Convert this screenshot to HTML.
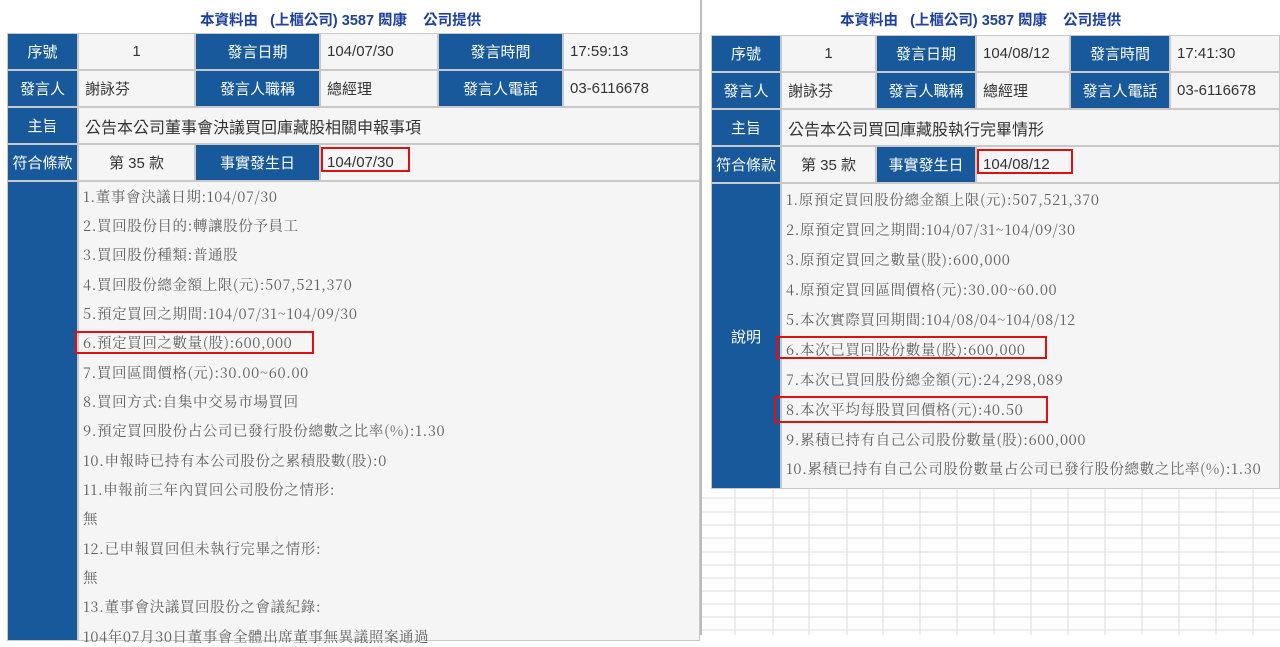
<!DOCTYPE html>
<html><head><meta charset="utf-8"><style>
*{margin:0;padding:0;box-sizing:border-box}
body{width:1280px;height:635px;background:#fff;position:relative;overflow:hidden;font-family:"Liberation Sans","Noto Sans CJK TC","Noto Sans CJK SC",sans-serif}
.a{position:absolute}
.h{position:absolute;background:#17599a;color:#fff;font-size:15px;display:flex;align-items:center;justify-content:center;border:1px solid #c8c8c8}
.v{position:absolute;background:#f5f5f5;color:#333;font-size:15px;display:flex;align-items:center;padding-left:6px;border:1px solid #c8c8c8}
.c{justify-content:center;padding-left:0}
.t{position:absolute;color:#1d3fa0;font-weight:bold;font-size:14.5px;white-space:pre}
.body{position:absolute;background:#f5f5f5;border:1px solid #c8c8c8;color:#606060;font-family:"Noto Serif CJK SC","Liberation Serif",serif;font-size:14.5px;letter-spacing:0.6px}
.body div{position:absolute;left:4px;white-space:nowrap;line-height:20px}
.r{position:absolute;border:2.5px solid #e01010}
</style></head><body>
<div class="a" style="left:700px;top:0;width:2px;height:635px;background:#bbb"></div>
<svg class="a" style="left:702px;top:488px" width="578" height="147">
<g stroke="#ddd" stroke-width="1">
<line x1="33" y1="0" x2="33" y2="147"/><line x1="71" y1="0" x2="71" y2="147"/><line x1="107" y1="0" x2="107" y2="147"/><line x1="145" y1="0" x2="145" y2="147"/><line x1="181" y1="0" x2="181" y2="147"/><line x1="218" y1="0" x2="218" y2="147"/><line x1="255" y1="0" x2="255" y2="147"/><line x1="292" y1="0" x2="292" y2="147"/><line x1="329" y1="0" x2="329" y2="147"/><line x1="366" y1="0" x2="366" y2="147"/><line x1="403" y1="0" x2="403" y2="147"/><line x1="440" y1="0" x2="440" y2="147"/><line x1="477" y1="0" x2="477" y2="147"/><line x1="514" y1="0" x2="514" y2="147"/><line x1="551" y1="0" x2="551" y2="147"/>
<line x1="0" y1="10" x2="578" y2="10"/><line x1="0" y1="24" x2="578" y2="24"/><line x1="0" y1="37" x2="578" y2="37"/><line x1="0" y1="50" x2="578" y2="50"/><line x1="0" y1="64" x2="578" y2="64"/><line x1="0" y1="77" x2="578" y2="77"/><line x1="0" y1="90" x2="578" y2="90"/><line x1="0" y1="103" x2="578" y2="103"/><line x1="0" y1="116" x2="578" y2="116"/><line x1="0" y1="129" x2="578" y2="129"/><line x1="0" y1="142" x2="578" y2="142"/>
</g></svg>

<div class="t" style="left:200px;top:9px">本資料由   (上櫃公司) 3587 閎康    公司提供</div>
<div class="h" style="left:7px;top:33px;width:71px;height:37px">序號</div>
<div class="v c" style="left:78px;top:33px;width:117px;height:37px">1</div>
<div class="h" style="left:195px;top:33px;width:125px;height:37px">發言日期</div>
<div class="v" style="left:320px;top:33px;width:118px;height:37px">104/07/30</div>
<div class="h" style="left:438px;top:33px;width:125px;height:37px">發言時間</div>
<div class="v" style="left:563px;top:33px;width:137px;height:37px">17:59:13</div>
<div class="h" style="left:7px;top:70px;width:71px;height:37px">發言人</div>
<div class="v" style="left:78px;top:70px;width:117px;height:37px">謝詠芬</div>
<div class="h" style="left:195px;top:70px;width:125px;height:37px">發言人職稱</div>
<div class="v" style="left:320px;top:70px;width:118px;height:37px">總經理</div>
<div class="h" style="left:438px;top:70px;width:125px;height:37px">發言人電話</div>
<div class="v" style="left:563px;top:70px;width:137px;height:37px">03-6116678</div>
<div class="h" style="left:7px;top:107px;width:71px;height:37px">主旨</div>
<div class="v" style="left:78px;top:107px;width:622px;height:37px;font-size:16px">公告本公司董事會決議買回庫藏股相關申報事項</div>
<div class="h" style="left:7px;top:144px;width:71px;height:37px">符合條款</div>
<div class="v c" style="left:78px;top:144px;width:117px;height:37px">第 35 款</div>
<div class="h" style="left:195px;top:144px;width:125px;height:37px">事實發生日</div>
<div class="v" style="left:320px;top:144px;width:380px;height:37px">104/07/30</div>
<div class="r" style="left:321px;top:147px;width:89px;height:25px"></div>
<div class="h" style="left:7px;top:181px;width:71px;height:460px"></div>
<div class="body" style="left:78px;top:181px;width:622px;height:460px">
<div style="top:5px">1.董事會決議日期:104/07/30</div>
<div style="top:34px">2.買回股份目的:轉讓股份予員工</div>
<div style="top:63px">3.買回股份種類:普通股</div>
<div style="top:93px">4.買回股份總金額上限(元):507,521,370</div>
<div style="top:122px">5.預定買回之期間:104/07/31~104/09/30</div>
<div style="top:151px">6.預定買回之數量(股):600,000</div>
<div style="top:181px">7.買回區間價格(元):30.00~60.00</div>
<div style="top:210px">8.買回方式:自集中交易市場買回</div>
<div style="top:239px">9.預定買回股份占公司已發行股份總數之比率(%):1.30</div>
<div style="top:269px">10.申報時已持有本公司股份之累積股數(股):0</div>
<div style="top:298px">11.申報前三年內買回公司股份之情形:</div>
<div style="top:327px">無</div>
<div style="top:357px">12.已申報買回但未執行完畢之情形:</div>
<div style="top:386px">無</div>
<div style="top:415px">13.董事會決議買回股份之會議紀錄:</div>
<div style="top:445px">104年07月30日董事會全體出席董事無異議照案通過</div>
</div>
<div class="r" style="left:75px;top:331px;width:239px;height:23px"></div>

<div class="t" style="left:840px;top:9px">本資料由   (上櫃公司) 3587 閎康    公司提供</div>
<div class="h" style="left:711px;top:35px;width:70px;height:37px">序號</div>
<div class="v c" style="left:781px;top:35px;width:95px;height:37px">1</div>
<div class="h" style="left:876px;top:35px;width:100px;height:37px">發言日期</div>
<div class="v" style="left:976px;top:35px;width:94px;height:37px">104/08/12</div>
<div class="h" style="left:1070px;top:35px;width:100px;height:37px">發言時間</div>
<div class="v" style="left:1170px;top:35px;width:110px;height:37px">17:41:30</div>
<div class="h" style="left:711px;top:72px;width:70px;height:37px">發言人</div>
<div class="v" style="left:781px;top:72px;width:95px;height:37px">謝詠芬</div>
<div class="h" style="left:876px;top:72px;width:100px;height:37px">發言人職稱</div>
<div class="v" style="left:976px;top:72px;width:94px;height:37px">總經理</div>
<div class="h" style="left:1070px;top:72px;width:100px;height:37px">發言人電話</div>
<div class="v" style="left:1170px;top:72px;width:110px;height:37px">03-6116678</div>
<div class="h" style="left:711px;top:109px;width:70px;height:37px">主旨</div>
<div class="v" style="left:781px;top:109px;width:499px;height:37px;font-size:16px">公告本公司買回庫藏股執行完畢情形</div>
<div class="h" style="left:711px;top:146px;width:70px;height:37px">符合條款</div>
<div class="v c" style="left:781px;top:146px;width:95px;height:37px">第 35 款</div>
<div class="h" style="left:876px;top:146px;width:100px;height:37px">事實發生日</div>
<div class="v" style="left:976px;top:146px;width:304px;height:37px">104/08/12</div>
<div class="r" style="left:977px;top:149px;width:96px;height:25px"></div>
<div class="h" style="left:711px;top:183px;width:70px;height:306px">說明</div>
<div class="body" style="left:781px;top:183px;width:499px;height:306px;overflow:hidden">
<div style="top:6px">1.原預定買回股份總金額上限(元):507,521,370</div>
<div style="top:36px">2.原預定買回之期間:104/07/31~104/09/30</div>
<div style="top:66px">3.原預定買回之數量(股):600,000</div>
<div style="top:96px">4.原預定買回區間價格(元):30.00~60.00</div>
<div style="top:126px">5.本次實際買回期間:104/08/04~104/08/12</div>
<div style="top:156px">6.本次已買回股份數量(股):600,000</div>
<div style="top:186px">7.本次已買回股份總金額(元):24,298,089</div>
<div style="top:216px">8.本次平均每股買回價格(元):40.50</div>
<div style="top:246px">9.累積已持有自己公司股份數量(股):600,000</div>
<div style="top:275px">10.累積已持有自己公司股份數量占公司已發行股份總數之比率(%):1.30</div>
</div>
<div class="r" style="left:776px;top:336px;width:271px;height:23px"></div>
<div class="r" style="left:774px;top:396px;width:274px;height:27px"></div>
</body></html>
